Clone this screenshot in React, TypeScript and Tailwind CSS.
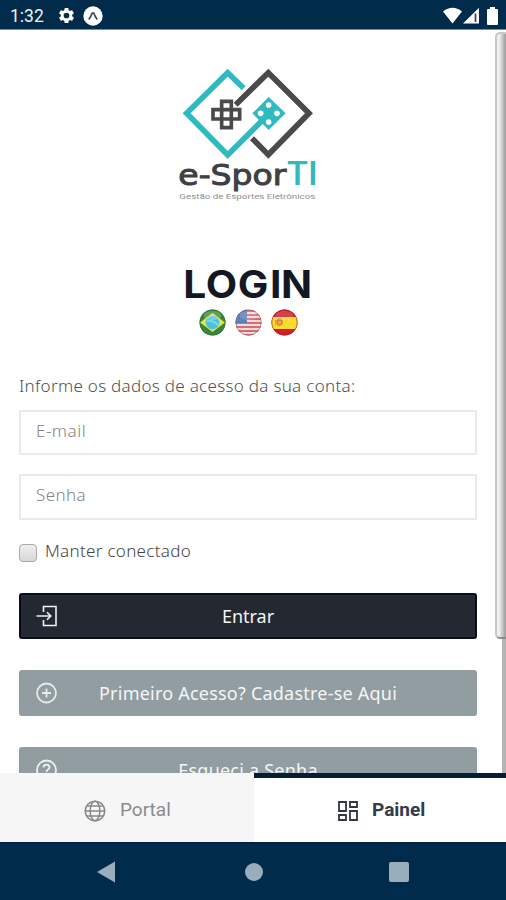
import React from 'react';

const Logo = () => (
  <svg className="block h-[150px] w-[160px]" viewBox="0 0 480 450" fill="none">
    <g strokeWidth="17">
      <path d="M197 134 295 38 417 160 295 284 246 235" stroke="#4a4a4c" />
      <path d="M221 85 173 38 50 160 173 285 284 174" stroke="#2fb9c1" />
    </g>
    <path d="M296 111 347 160 296 210 247 160Z" fill="#2fb9c1" />
    <g fill="#fff">
      <circle cx="296" cy="135" r="8.500" />
      <circle cx="272" cy="160" r="8.500" />
      <circle cx="321" cy="160" r="8.500" />
      <circle cx="296" cy="186" r="8.500" />
    </g>
    <path
      d="M155 124h29v25h25v28h-25v26h-29v-26h-26v-28h26zM155 149h29v28h-29z"
      stroke="#4a4a4c"
      strokeWidth="11"
    />
    <text x="25" y="375" fontFamily="'DejaVu Sans', sans-serif" fontSize="85" fill="#404042" stroke="#404042" strokeWidth="3" textLength="324" lengthAdjust="spacingAndGlyphs">e-Spor</text>
    <text x="351" y="375" fontFamily="Roboto, sans-serif" fontSize="102" fontWeight="500" fill="#2fb9c1" textLength="92" lengthAdjust="spacingAndGlyphs">TI</text>
    <text x="28" y="416" fontFamily="Roboto, sans-serif" fontSize="22" fill="#8f8f91" textLength="408" lengthAdjust="spacingAndGlyphs">Gestão de Esportes Eletrônicos</text>
  </svg>
);

const Brazil = () => (
  <svg className="size-[27px]" viewBox="0 0 27 27">
    <circle cx="13.500" cy="13.500" r="13" fill="#37863b" />
    <path d="M13.500 4 26 13.500 13.500 23 1 13.500Z" fill="#e8e04a" />
    <circle cx="13.500" cy="13.500" r="6.800" fill="#4cc3de" />
    <path d="M8 12q6-1 11 4" stroke="#8fdcea" strokeWidth="1.500" fill="none" />
    <ellipse cx="13.500" cy="6.500" rx="9" ry="4.500" fill="#fff" opacity=".2" />
    <circle cx="13.500" cy="13.500" r="12.700" fill="none" stroke="#286c2c" strokeWidth=".8" opacity=".7" />
  </svg>
);

const Usa = () => (
  <svg className="size-[27px]" viewBox="0 0 27 27">
    <defs>
      <clipPath id="usa"><circle cx="13.500" cy="13.500" r="13" /></clipPath>
    </defs>
    <g clipPath="url(#usa)">
      <path d="M0 0h27v27H0z" fill="#f0dada" />
      <path d="M0 2h27M0 6h27M0 10h27M0 14h27M0 18h27M0 22h27M0 26h27" stroke="#d66c74" strokeWidth="2" />
      <path d="M0 0h12v14H0z" fill="#5580b8" />
      <path d="M3 5h9M2 8h10M2 11h10" stroke="#7f9dc8" strokeWidth="1" strokeDasharray="1 2" />
      <ellipse cx="13.500" cy="6.500" rx="9" ry="4.500" fill="#fff" opacity=".15" />
    </g>
    <circle cx="13.500" cy="13.500" r="12.700" fill="none" stroke="#8c5560" strokeWidth=".8" opacity=".7" />
  </svg>
);

const Spain = () => (
  <svg className="size-[27px]" viewBox="0 0 27 27">
    <defs>
      <clipPath id="spain"><circle cx="13.500" cy="13.500" r="13" /></clipPath>
    </defs>
    <g clipPath="url(#spain)">
      <path d="M0 0h27v27H0z" fill="#cf2028" />
      <path d="M0 8h27v12H0z" fill="#fbdc2c" />
      <path d="M6 11h5v4q-2.500 3-5 0z" fill="#e8a850" stroke="#d0653c" strokeWidth="1" />
      <path d="M4.500 11v6M7 9.500h3" stroke="#e0a050" strokeWidth="1" />
      <ellipse cx="13.500" cy="6.500" rx="9" ry="4.500" fill="#fff" opacity=".15" />
    </g>
    <circle cx="13.500" cy="13.500" r="12.700" fill="none" stroke="#a21c20" strokeWidth=".8" opacity=".7" />
  </svg>
);

const EnterIcon = () => (
  <svg className="size-[22px]" viewBox="0 0 22 22" fill="none" stroke="#eef0f2" strokeWidth="1.600">
    <path d="M7.500 7V1.500H20v19H7.500V15M.5 11h14M11 7.300 14.800 11 11 14.700" />
  </svg>
);

const PlusIcon = () => (
  <svg className="size-[22px]" viewBox="0 0 22 22" fill="none" stroke="#e6ebec" strokeWidth="1.800">
    <circle cx="10.500" cy="11" r="9.500" />
    <path d="M10.500 6.500v9M6 11h9" />
  </svg>
);

const HelpIcon = () => (
  <svg className="size-[22px]" viewBox="0 0 22 22" fill="none" stroke="#eef1f2" strokeWidth="1.800">
    <circle cx="10.500" cy="11" r="9.500" />
    <path d="M7.500 8.600q0-3 3-3t3 2.700q0 1.500-1.700 2.500-1.300.8-1.300 2.200M10.500 14.800v1.500" />
  </svg>
);

type BarProps = { icon: React.ReactNode; label: string; look: string; text: string };

const BarButton = ({ icon, label, look, text }: BarProps) => (
  <button className={`grid h-[46px] w-full shrink-0 grid-cols-[22px_1fr_22px] items-center rounded-[3px] ${look}`}>
    {icon}
    <span className={`whitespace-nowrap text-center text-[18px] leading-[24px] ${text}`}>{label}</span>
  </button>
);

export default function App() {
  return (
    <div className="flex h-[900px] w-[506px] flex-col overflow-hidden bg-white font-['Noto_Sans',sans-serif]">
      <header className="flex h-[30px] shrink-0 items-center justify-between border-b border-[#7d8c99] bg-[#002b4b] pl-[10px] pr-[8px] pt-[2px]">
        <div className="flex items-center">
          <span className="w-[47px] font-[Roboto,sans-serif] text-[17.5px] leading-5 text-[#eef2f6]">1:32</span>
          <svg className="size-[19px]" viewBox="0 0 24 24" fill="#fff">
            <path d="M19.140 12.940c.04-.3.060-.610.060-.940s-.020-.640-.070-.940l2.030-1.580a.49.49 0 0 0 .120-.610l-1.920-3.320a.49.49 0 0 0-.590-.220l-2.390.960a7 7 0 0 0-1.620-.940l-.360-2.540A.48.48 0 0 0 13.920 2.400h-3.840a.48.48 0 0 0-.470.410l-.360 2.540a7 7 0 0 0-1.620.940l-2.390-.960a.48.48 0 0 0-.590.220L2.740 8.870a.48.48 0 0 0 .120.610l2.030 1.580a6 6 0 0 0 0 1.880l-2.030 1.580a.49.49 0 0 0-.120.610l1.920 3.320c.12.220.370.290.590.220l2.390-.960c.5.380 1.030.7 1.620.940l.36 2.540c.05.240.240.410.480.410h3.840c.24 0 .440-.170.470-.410l.36-2.540a7 7 0 0 0 1.620-.940l2.390.960c.22.080.470 0 .590-.220l1.920-3.320a.48.48 0 0 0-.120-.610zM12 15.600A3.600 3.600 0 1 1 12 8.400a3.600 3.600 0 0 1 0 7.200" />
          </svg>
          <svg className="ml-[7px] size-[20px]" viewBox="0 0 20 20">
            <circle cx="10" cy="10" r="9.700" fill="#fff" />
            <path d="M5.800 13.500Q8 10.500 9.300 7h1.400Q12 10.500 14.200 13.500" fill="none" stroke="#33475a" strokeWidth="1.700" />
          </svg>
        </div>
        <div className="flex items-center">
          <svg className="h-[17px] w-[19px]" viewBox="0 0 19 17" fill="#fff"><path d="M0 4.500Q9.500-3 19 4.500L9.500 16.500Z" /></svg>
          <svg className="ml-px h-[17px] w-[17px]" viewBox="0 0 17 17">
            <path d="M0 16.500 16 .8v15.700z" fill="#fff" />
            <path d="M12.500 6.500v8.500" stroke="#344657" strokeWidth="1.800" />
          </svg>
          <svg className="ml-[7px] h-[18px] w-[11px]" viewBox="0 0 11 18" fill="#fff"><path d="M3 0h5v2h2q1 0 1 1v14q0 1-1 1H1q-1 0-1-1V3q0-1 1-1h2z" /></svg>
        </div>
      </header>

      <div className="flex h-[743px] shrink-0 justify-between overflow-hidden">
        <main className="ml-[19px] flex w-[458px] flex-col">
          <div className="mt-[30px] pl-[151px]"><Logo /></div>
          <h1 className="mt-[51px] flex h-[48px] shrink-0 justify-center pl-[2px]">
            <svg className="h-[48px] w-[134px]" viewBox="0 0 134 48">
              <text x="1.200 22.300 52.500 83 93.300" y="37" transform="scale(1.06 1)" fontFamily="Inter, sans-serif" fontWeight="700" fontSize="38.500" fill="#131822">LOGIN</text>
            </svg>
          </h1>
          <div className="flex h-[27px] shrink-0 justify-center gap-[9px]">
            <Brazil /><Usa /><Spain />
          </div>
          <p className="mt-[38px] whitespace-nowrap text-[17px] font-light leading-[24px] tracking-[0.3px] text-[#505050]">Informe os dados de acesso da sua conta:</p>
          <div className="mt-[12px] flex h-[45px] shrink-0 items-center border-2 border-[#e9ebeb] px-[15px] pb-[4px] text-[17px] font-light tracking-[0.5px] text-[#858585]">E-mail</div>
          <div className="mt-[19px] flex h-[46px] shrink-0 items-center border-2 border-[#e9ebeb] px-[15px] pb-[5px] text-[17px] font-light tracking-[0.4px] text-[#858585]">Senha</div>
          <label className="mt-[18px] flex h-[26px] shrink-0 items-center text-[17px] font-light tracking-[0.3px] text-[#444]">
            <span className="mr-[8px] mt-[4px] size-[18px] rounded-[4px] border border-[#aaa] bg-linear-to-b from-[#eee] to-[#d9d9d9]" />
            Manter conectado
          </label>
          <div className="mt-[29px] flex flex-col gap-[31px]">
            <BarButton icon={<EnterIcon />} label="Entrar" look="border-2 border-[#090d1b] bg-[#232831] px-[15px]" text="text-[#f3f4f5]" />
            <BarButton icon={<PlusIcon />} label="Primeiro Acesso? Cadastre-se Aqui" look="bg-[#929da1] px-[17px]" text="tracking-[0.22px] text-[#f4f6f6]" />
            <BarButton icon={<HelpIcon />} label="Esqueci a Senha" look="bg-[#929da1] px-[17px]" text="tracking-[0.22px] text-[#f4f6f6]" />
          </div>
        </main>
        <div className="flex w-[11px] flex-col items-end pt-[2px]">
          <div className="h-[607px] w-[11px] shrink-0 rounded-l-[5px] border-b-2 border-l-2 border-t-2 border-[#c8c8c8] border-b-[#8d8d8d] bg-linear-to-r from-[#f0f0f0] from-25% via-[#d8d8d8] via-45% to-[#999]" />
          <div className="w-[4px] flex-1 bg-[#b4b4b4]" />
        </div>
      </div>

      <nav className="flex h-[69px] shrink-0">
        <div className="flex w-[254px] items-center bg-[#f6f6f6] pl-[84px] pt-[6px]">
          <svg className="size-[22px]" viewBox="0 0 22 22" fill="none" stroke="#888" strokeWidth="1.500">
            <circle cx="11" cy="11" r="9.800" />
            <ellipse cx="11" cy="11" rx="4.800" ry="9.800" />
            <path d="M1 11h20M2.800 6h16.400M2.800 16h16.400" />
          </svg>
          <span className="ml-[14px] font-[Roboto,sans-serif] text-[19px] text-[#8b8b8b]">Portal</span>
        </div>
        <div className="flex flex-1 items-center border-t-[5px] border-[#061d38] bg-white pl-[84px] pt-px">
          <svg className="size-[20px]" viewBox="0 0 20 20" fill="none" stroke="#303548" strokeWidth="1.800">
            <path d="M1 1h7v9H1zM12 1h7v5h-7zM1 14h7v5H1zM12 10h7v9h-7z" />
          </svg>
          <span className="ml-[14px] font-[Roboto,sans-serif] text-[19px] font-bold text-[#343a48]">Painel</span>
        </div>
      </nav>

      <footer className="flex h-[58px] shrink-0 items-center border-t-2 border-[#052040] bg-[#002b4b]">
        <svg className="ml-[97px] h-[22px] w-[18px]" viewBox="0 0 18 22" fill="#9aadba"><path d="M0 11 18 .5v21z" /></svg>
        <span className="ml-[130px] size-[18px] rounded-full bg-[#9aadba]" />
        <span className="ml-[126px] size-[20px] rounded-[2px] bg-[#9aadba]" />
      </footer>
    </div>
  );
}
